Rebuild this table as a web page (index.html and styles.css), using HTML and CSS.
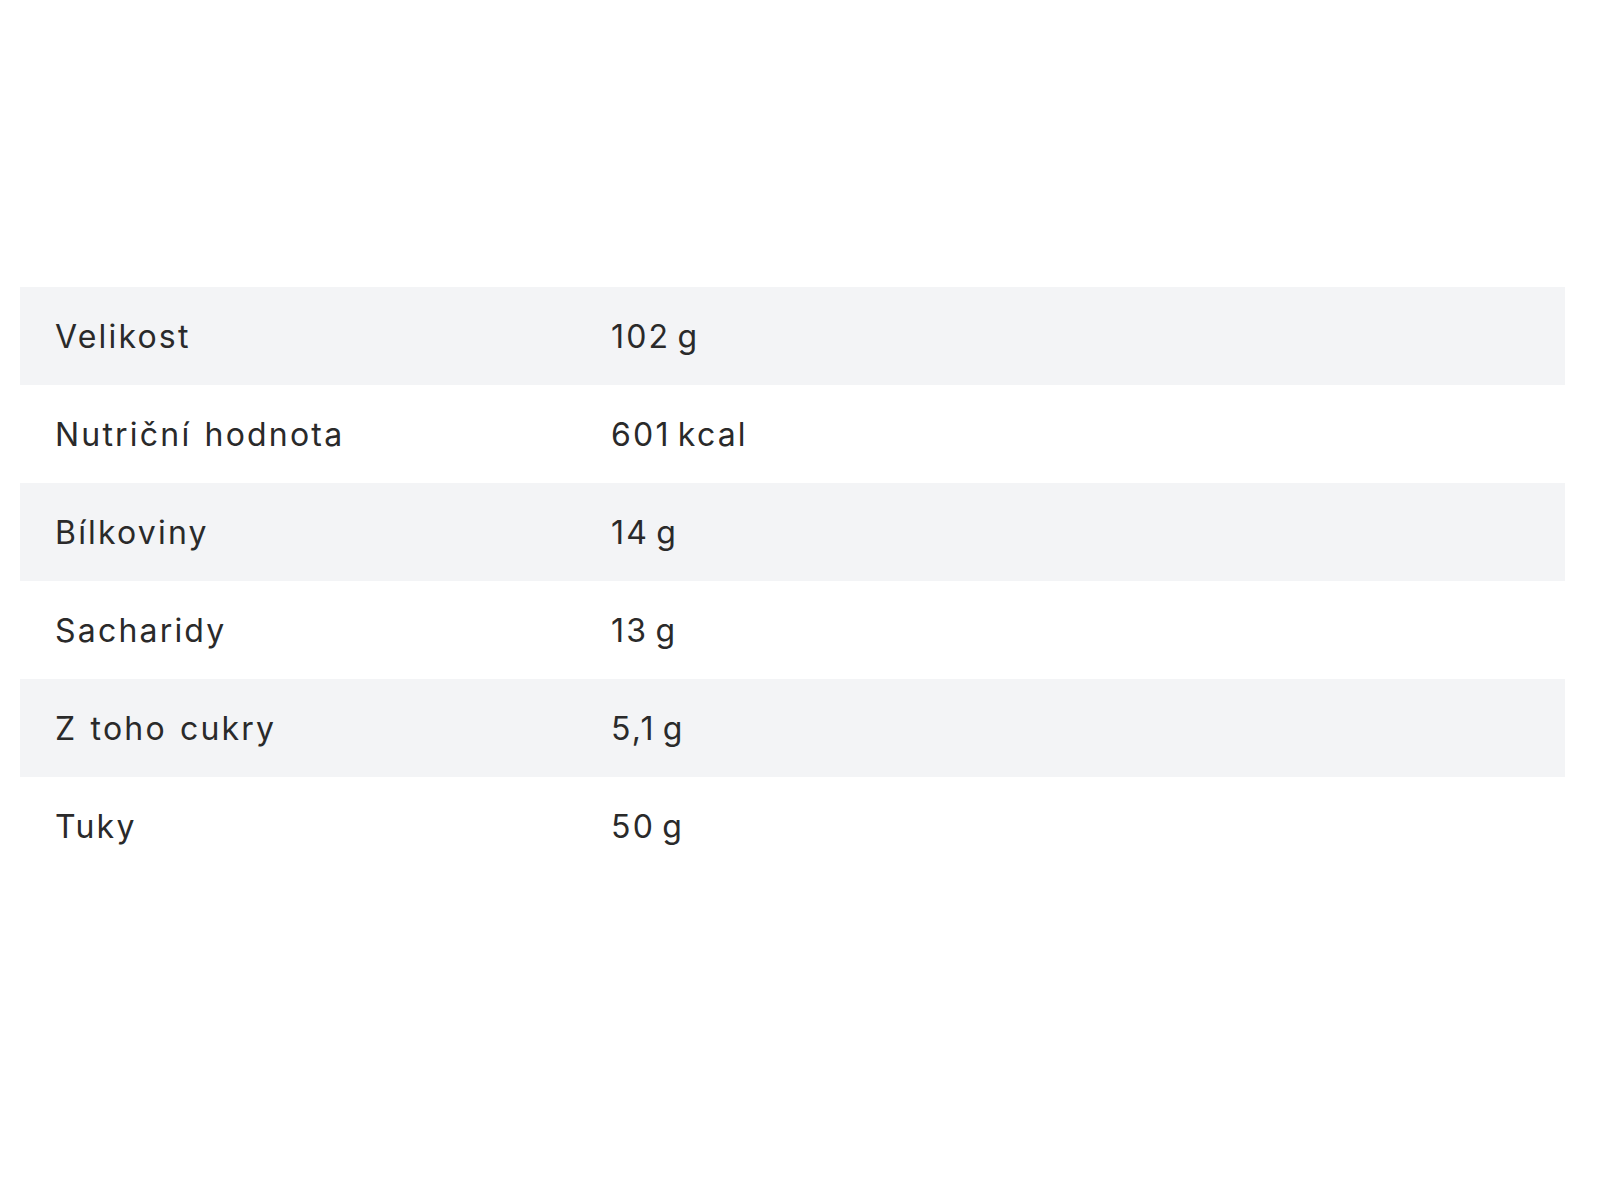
FILE: index.html
```html
<!DOCTYPE html>
<html lang="cs">
<head>
<meta charset="utf-8">
<title>Parametry</title>
<link rel="stylesheet" href="styles.css">
</head>
<body>
<main class="page">
  <table class="params">
    <tbody>
      <tr><td class="label">Velikost</td><td class="value">102 g</td></tr>
      <tr><td class="label">Nutriční hodnota</td><td class="value">601 kcal</td></tr>
      <tr><td class="label">Bílkoviny</td><td class="value">14 g</td></tr>
      <tr><td class="label">Sacharidy</td><td class="value">13 g</td></tr>
      <tr><td class="label">Z toho cukry</td><td class="value">5,1 g</td></tr>
      <tr><td class="label">Tuky</td><td class="value">50 g</td></tr>
    </tbody>
  </table>
</main>
</body>
</html>
```
FILE: styles.css
```css
html, body {
  margin: 0;
  padding: 0;
  background: #ffffff;
}

.page {
  padding: 287px 35px 0 20px;
}

.params {
  width: 100%;
  table-layout: fixed;
  border-collapse: collapse;
  font-family: Inter, "Open Sans", "Liberation Sans", sans-serif;
  font-size: 32px;
  font-weight: 400;
  letter-spacing: 2.2px;
  color: #2a2a2a;
}

.params tr {
  height: 98px;
}

.params tr:nth-child(odd) {
  background: #f3f4f6;
}

.params td {
  padding: 0;
  vertical-align: middle;
}

.params .label {
  width: 591px;
  padding-left: 35px;
  box-sizing: border-box;
  word-spacing: 2px;
}

.params .value {
  word-spacing: -4px;
}
```
